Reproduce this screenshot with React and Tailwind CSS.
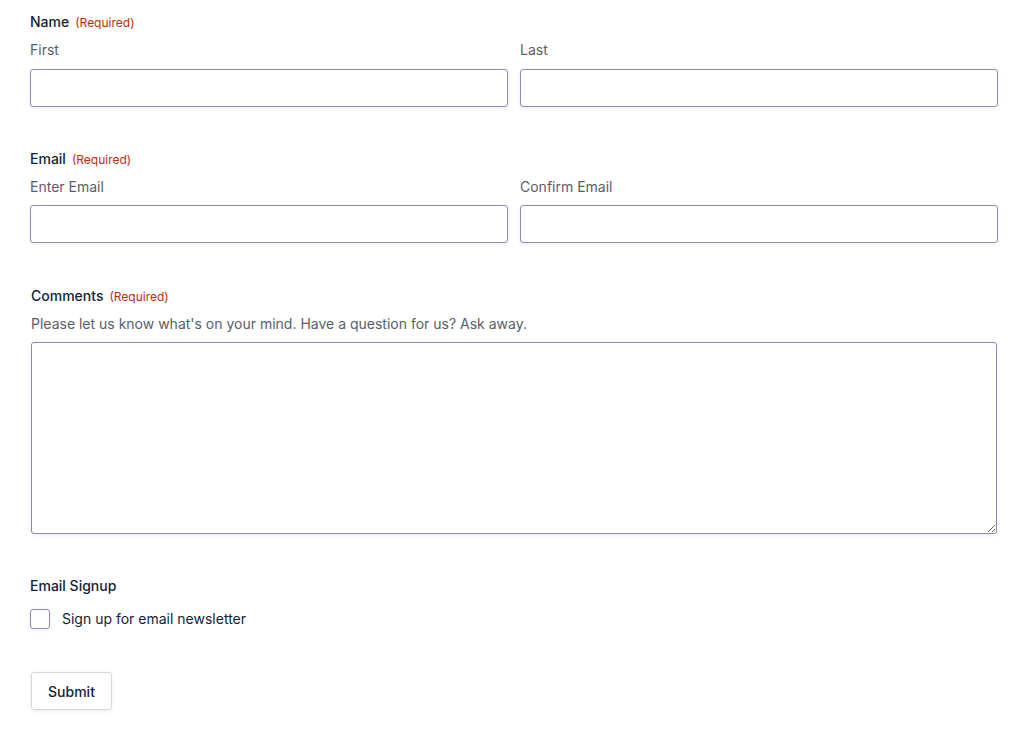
export default function App() {
  const labelClass = "flex items-baseline h-5 text-[14px] leading-5 font-medium text-[#112337]";
  const reqClass = "ml-[6px] text-[12px] font-normal text-[#c02b0a]";
  const subClass = "block text-[14px] leading-5 text-[#585e6a]";
  const inputClass =
    "w-full h-[38px] rounded-[3px] border border-[#8c8abb] bg-white px-3 text-[14px] text-[#112337] shadow-[0_1px_4px_rgba(18,25,97,0.08)] outline-none";

  return (
    <div className="min-h-screen bg-white font-['Inter',sans-serif] px-[30px] pt-3 pb-8 w-[1016px]">
      <form className="w-[968px]" onSubmit={(e) => e.preventDefault()}>
        {/* Name */}
        <div>
          <div className={labelClass}>
            Name<span className={reqClass}>(Required)</span>
          </div>
          <div className="mt-2 grid grid-cols-2 gap-3">
            <div>
              <label className={`${subClass} mb-[9px]`}>First</label>
              <input className={inputClass} />
            </div>
            <div>
              <label className={`${subClass} mb-[9px]`}>Last</label>
              <input className={inputClass} />
            </div>
          </div>
        </div>

        {/* Email */}
        <div className="mt-[42px]">
          <div className={labelClass}>
            Email<span className={reqClass}>(Required)</span>
          </div>
          <div className="mt-2 grid grid-cols-2 gap-3">
            <div>
              <label className={`${subClass} mb-2`}>Enter Email</label>
              <input className={inputClass} />
            </div>
            <div>
              <label className={`${subClass} mb-2`}>Confirm Email</label>
              <input className={inputClass} />
            </div>
          </div>
        </div>

        {/* Comments */}
        <div className="mt-[43px] pl-px pr-px">
          <div className={labelClass}>
            Comments<span className={reqClass}>(Required)</span>
          </div>
          <div className={`${subClass} mt-2 mb-2`}>
            Please let us know what's on your mind. Have a question for us? Ask away.
          </div>
          <textarea className="block w-full h-[192px] rounded-[3px] border border-[#8c8abb] bg-white px-3 py-2 text-[14px] text-[#112337] shadow-[0_1px_4px_rgba(18,25,97,0.08)] outline-none" />
        </div>

        {/* Email Signup */}
        <div className="mt-[42px]">
          <div className={labelClass}>Email Signup</div>
          <label className="mt-[13px] flex items-center gap-3 h-5">
            <span className="w-5 h-5 rounded-[3px] border border-[#8c8abb] bg-white shadow-[0_1px_4px_rgba(18,25,97,0.08)]"></span>
            <span className="text-[14px] leading-5 text-[#112337]">
              Sign up for email newsletter
            </span>
          </label>
        </div>

        {/* Submit */}
        <div className="mt-[43px] pl-px">
          <button
            type="submit"
            className="h-[38px] w-[81px] rounded-[3px] border border-[#d6d7db] bg-white text-[14px] font-medium text-[#112337] shadow-[0_1px_4px_rgba(18,25,97,0.08)]"
          >
            Submit
          </button>
        </div>
      </form>
    </div>
  );
}
